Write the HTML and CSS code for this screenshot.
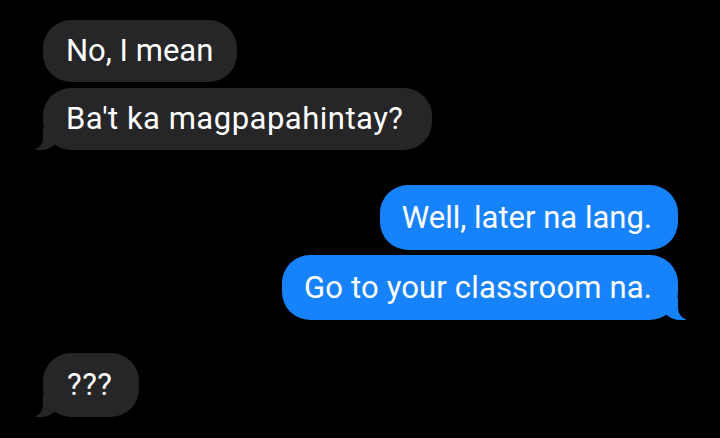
FILE: index.html
```html
<!DOCTYPE html>
<html>
<head>
<meta charset="utf-8">
<link rel="stylesheet" href="styles.css">
</head>
<body>
<div class="chat">
  <div class="bubble in b1">No, I mean</div>
  <div class="bubble in tail b2">Ba't ka magpapahintay?</div>
  <div class="bubble out b3">Well, later na lang.</div>
  <div class="bubble out tail b4">Go to your classroom na.</div>
  <div class="bubble in tail b5">???</div>
</div>
</body>
</html>
```
FILE: styles.css
```css
html, body {
  margin: 0;
  background: #000;
  width: 720px;
  height: 438px;
  overflow: hidden;
}
.chat {
  display: flex;
  flex-direction: column;
  padding: 20px 42px 0 43px;
  font-family: Roboto, "Liberation Sans", sans-serif;
}
.bubble {
  position: relative;
  height: 62px;
  line-height: 62px;
  font-size: 31px;
  color: #fff;
  padding: 0 24px 0 23px;
  border-radius: 28px;
  box-sizing: border-box;
  white-space: nowrap;
}
.in {
  align-self: flex-start;
  background: #262629;
}
.out {
  align-self: flex-end;
  background: #1682fb;
  height: 65px;
  line-height: 65px;
  padding: 0 26px 0 22px;
}
.b2 { margin-top: 6px; letter-spacing: 0.5px; padding-right: 28px; }
.b3 { margin-top: 35px; }
.b4 { margin-top: 5px; letter-spacing: 0.15px; }
.b5 { margin-top: 33px; height: 64px; line-height: 64px; padding: 0 27px 0 24px; letter-spacing: 0.5px; }

.tail::before, .tail::after {
  content: "";
  position: absolute;
  bottom: 0;
  height: 22px;
}
.in.tail::before {
  left: -8px;
  width: 24px;
  background: #262629;
  border-bottom-right-radius: 18px 16px;
}
.in.tail::after {
  left: -14px;
  width: 14px;
  background: #000;
  border-bottom-right-radius: 12px;
}
.out.tail::before {
  right: -8px;
  width: 24px;
  background: #1682fb;
  border-bottom-left-radius: 18px 16px;
}
.out.tail::after {
  right: -14px;
  width: 14px;
  background: #000;
  border-bottom-left-radius: 12px;
}
```
